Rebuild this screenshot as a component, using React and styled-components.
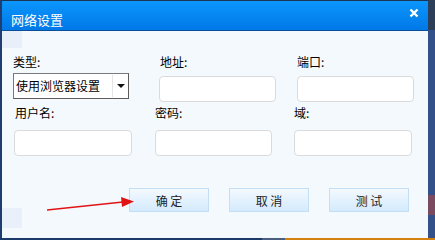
import styled, { createGlobalStyle } from "styled-components";

const GlobalStyle = createGlobalStyle`
  html, body {
    margin: 0;
    padding: 0;
    background: #1d3b6a;
  }
  body {
    font-family: "Noto Sans CJK SC", "Noto Sans", sans-serif;
    font-size: 12px;
    color: #000;
  }
`;

const Screen = styled.div`
  width: 435px;
  height: 240px;
  overflow: hidden;
  position: relative;
  background: linear-gradient(90deg, #1d3b6a 0, #1d3b6a 262px, #4a5f80 262px, #4a5f80 285px, #d4800e 285px);
  display: flex;
`;

const Side = styled.div`
  width: 2px;
  height: 238px;
  background: #1f3d70;
`;

const Dialog = styled.div`
  width: 426px;
  height: 238px;
  display: flex;
  flex-direction: column;
  background: #f4f9fe;
`;

const RightEdge = styled.div`
  flex: 1;
  height: 238px;
  background: linear-gradient(#2c3e58 0, #2c3e58 30px, #33508a 30px, #33508a 195px, #7a4a60 195px, #7a4a60 215px, #33508a 215px);
`;

const TitleBar = styled.div`
  height: 29px;
  border-top: 1px solid #1b3452;
  border-bottom: 1px solid #0a4f9a;
  background: linear-gradient(#0c96fb, #0078e8);
  display: flex;
  align-items: center;
  justify-content: space-between;
  padding: 0 8px 0 9px;
`;

const Title = styled.span`
  color: #fff;
  font-size: 13px;
  line-height: 16px;
  margin-top: 8px;
`;

const Close = styled.span`
  width: 10px;
  height: 10px;
  margin-top: -5px;
  margin-right: 1px;
  display: flex;
`;

const Body = styled.div`
  flex: 1;
  position: relative;
  padding-top: 23px;
  background:
    linear-gradient(#e8eff8, #e8eff8) 0 0 / 20px 17px no-repeat,
    linear-gradient(#e9f0f9, #e9f0f9) 0 177px / 20px 20px no-repeat,
    #f4f9fe;
`;

const Row = styled.div`
  display: flex;
  padding-left: ${(p) => p.$left}px;
  margin-bottom: ${(p) => p.$bottom || 0}px;
`;

const Field = styled.div`
  display: flex;
  flex-direction: column;
  width: ${(p) => p.$w}px;
  margin-right: ${(p) => p.$gap || 0}px;
`;

const Label = styled.label`
  line-height: 16px;
  height: 16px;
  padding-left: ${(p) => p.$shift || 0}px;
  margin-bottom: ${(p) => p.$space}px;
`;

const Input = styled.div`
  box-sizing: border-box;
  height: 26px;
  background: #fff;
  border: 1px solid #d9dbdd;
  border-radius: 4px;
`;

const Select = styled.div`
  box-sizing: border-box;
  height: 26px;
  width: 116px;
  background: #fff;
  border: 1px solid #7a7a7a;
  border-right-color: #5c5c5c;
  border-bottom-color: #5c5c5c;
  display: flex;
  align-items: center;
  justify-content: space-between;
  padding-left: 2px;
  line-height: 16px;
`;

const Arrow = styled.span`
  width: 15px;
  height: 22px;
  border-left: 1px solid #e4e4e4;
  display: flex;
  align-items: center;
  justify-content: center;
  &::after {
    content: "";
    border-left: 4px solid transparent;
    border-right: 4px solid transparent;
    border-top: 4px solid #111;
    margin-left: 1px;
  }
`;

const Buttons = styled.div`
  display: flex;
  gap: 20px;
  padding-left: 127px;
  margin-top: 32px;
`;

const Button = styled.button`
  box-sizing: border-box;
  width: 80px;
  height: 24px;
  border: 1px solid #c4def5;
  background: linear-gradient(#f3f9ff, #d4eafd);
  font-family: inherit;
  font-size: 12px;
  color: #222;
  padding: 0;
  cursor: pointer;
  white-space: pre;
`;

const Pointer = styled.svg`
  position: absolute;
  left: 43px;
  top: 164px;
`;

const App = () => {
  return (
    <>
      <GlobalStyle />
      <Screen>
        <Side />
        <Dialog>
          <TitleBar>
            <Title>网络设置</Title>
            <Close>
              <svg width="10" height="10" viewBox="0 0 10 10">
                <path d="M1.5 1.5 L8.5 8.5 M8.5 1.5 L1.5 8.5" stroke="#fff" strokeWidth="2.4" />
              </svg>
            </Close>
          </TitleBar>
          <Body>
            <Row $left={11} $bottom={3}>
              <Field $w={116} $gap={30}>
                <Label $space={3}>类型:</Label>
                <Select>
                  使用浏览器设置
                  <Arrow />
                </Select>
              </Field>
              <Field $w={117} $gap={21}>
                <Label $space={6} $shift={1}>地址:</Label>
                <Input />
              </Field>
              <Field $w={117}>
                <Label $space={6}>端口:</Label>
                <Input />
              </Field>
            </Row>
            <Row $left={12}>
              <Field $w={118} $gap={23}>
                <Label $space={9} $shift={1}>用户名:</Label>
                <Input />
              </Field>
              <Field $w={117} $gap={22}>
                <Label $space={9}>密码:</Label>
                <Input />
              </Field>
              <Field $w={118}>
                <Label $space={9}>域:</Label>
                <Input />
              </Field>
            </Row>
            <Buttons>
              <Button>确 定</Button>
              <Button>取 消</Button>
              <Button>测 试</Button>
            </Buttons>
            <Pointer width="92" height="16" viewBox="0 0 92 16">
              <path d="M2 15 L78 7" stroke="#e01414" strokeWidth="1.6" />
              <path d="M76 2 L89 6.5 L77 12 Z" fill="#e01414" />
            </Pointer>
          </Body>
        </Dialog>
        <RightEdge />
      </Screen>
    </>
  );
};

export default App;
